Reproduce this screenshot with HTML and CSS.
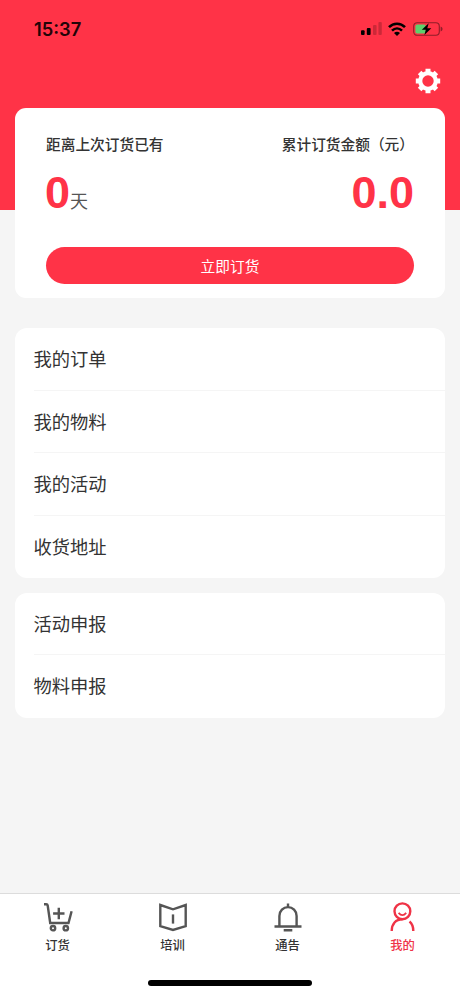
FILE: index.html
```html
<!DOCTYPE html>
<html lang="zh-CN">

<head>
  <meta charset="UTF-8">
  <meta name="viewport" content="width=device-width, initial-scale=1.0">
  <title>我的</title>
  <link rel="stylesheet" href="styles.css">
</head>

<body>
  <div class="page">
    <div class="header">
      <div class="status">
        <span class="time">15:37</span>
        <div class="status-icons">
          <svg width="21" height="13" viewBox="0 0 21 13">
            <rect x="0" y="8.3" width="3.6" height="4.7" rx="1" />
            <rect x="5.8" y="6" width="3.8" height="7" rx="1" />
            <rect x="12" y="3" width="3.6" height="10" rx="1" opacity=".2" />
            <rect x="17.4" y="0" width="3.4" height="13" rx="1" opacity=".2" />
          </svg>
          <svg width="18" height="14" viewBox="0 0 18 14">
            <g fill="none" stroke="#000" stroke-width="2.6">
              <path d="M1 5.2C5.5.5 12.5.5 17 5.2" />
              <path d="M4 8.6C7 5.7 11 5.7 14 8.6" />
            </g>
            <path d="M6 10.9Q9 8.4 12 10.9L9 13.9z" />
          </svg>
          <svg width="30" height="14" viewBox="0 0 30 14">
            <rect x=".7" y=".7" width="25.6" height="12.6" rx="3.5" fill="none" stroke="#8f1e29" stroke-width="1.1" />
            <rect x="2.4" y="2.4" width="10.4" height="9.2" rx="1.8" fill="#5dd06c" />
            <path d="M27.6 4.6q2 .7 2 2.4t-2 2.4z" fill="#8f1e29" />
            <path d="M15.7 1.2L8.8 7.7h4l-1.4 5.3 6.9-6.8h-4z" />
          </svg>
        </div>
      </div>
      <div class="setting">
        <svg width="26" height="26" viewBox="-13 -13 26 26" fill="none" stroke="#fff">
          <circle r="7.8" stroke-width="4.2" />
          <path stroke-width="5" stroke-linejoin="round" d="M0-8V-12.2M0 8V12.2M-8 0H-12.2M8 0H12.2M5.7-5.7L8.4-8.4M5.7 5.7L8.4 8.4M-5.7 5.7L-8.4 8.4M-5.7-5.7L-8.4-8.4" />
        </svg>
      </div>
    </div>

    <div class="card">
      <div class="total">
        <div class="total-item">
          <p class="total-tit">距离上次订货已有</p>
          <p class="total-num">0<span class="unit">天</span></p>
        </div>
        <div class="total-item total-right">
          <p class="total-tit">累计订货金额（元）</p>
          <p class="total-num">0.0</p>
        </div>
      </div>
      <button class="btn">立即订货</button>
    </div>

    <ul class="list">
      <li>我的订单</li>
      <li>我的物料</li>
      <li>我的活动</li>
      <li>收货地址</li>
    </ul>
    <ul class="list">
      <li>活动申报</li>
      <li>物料申报</li>
    </ul>

    <div class="footer">
      <div class="tabs">
        <div class="tab">
          <svg width="30" height="30" viewBox="0 0 30 30">
            <path d="M1 2.2h2.2q1.3 0 1.5 1.3L7.2 21h18.3L28.6 9.3" />
            <path d="M15.8 5.8v11.4M10.1 11.5h11.4" />
            <circle cx="10" cy="26.2" r="2.2" />
            <circle cx="22.8" cy="26.2" r="2.2" />
          </svg>
          <span>订货</span>
        </div>
        <div class="tab">
          <svg width="30" height="30" viewBox="0 0 30 30">
            <path d="M2.3 3L15 7.3 27.7 3v21.2L15 28 2.3 24.2z" />
            <path d="M15 12.4v9.2" />
          </svg>
          <span>培训</span>
        </div>
        <div class="tab">
          <svg width="30" height="30" viewBox="0 0 30 30">
            <path d="M15 1.4v4M6.4 24.5V14a8.6 8.9 0 0 1 17.2 0v10.5M1.5 24.5h27M10.7 28.2h8.6" />
          </svg>
          <span>通告</span>
        </div>
        <div class="tab active">
          <svg width="30" height="30" viewBox="0 0 30 30">
            <circle cx="14.4" cy="9.3" r="7.9" />
            <path d="M10.6 10.8q3.8 4.5 7.6 0" stroke-width="1.8" />
            <path d="M3.7 29C3.7 22 7.7 17.2 14.4 17.2M21.5 19.5C24.2 21.7 25.3 25 25.3 29" />
          </svg>
          <span>我的</span>
        </div>
      </div>
      <div class="home-bar"></div>
    </div>
  </div>
</body>

</html>
```
FILE: styles.css
```css
body,
p,
ul {
  margin: 0;
  padding: 0;
}

ul {
  list-style: none;
}

body {
  font-family: "Liberation Sans", "Noto Sans CJK SC", sans-serif;
  color: #333;
  background-color: #f5f5f5;
}

svg {
  display: block;
}

.page {
  display: flex;
  flex-direction: column;
  height: 996px;
}

/* 顶部 */
.header {
  box-sizing: border-box;
  flex: none;
  height: 210px;
  margin-bottom: -102px;
  background-color: #ff3347;
}

.status {
  display: flex;
  justify-content: space-between;
  align-items: center;
  height: 57px;
  padding: 0 17.5px 0 34px;
}

.time {
  font: 600 18.3px/20px Inter, sans-serif;
  color: #210408;
}

.status-icons {
  display: flex;
  align-items: center;
  gap: 6.5px;
}

.setting {
  display: flex;
  justify-content: flex-end;
  padding: 11px 19.5px 0 0;
}

/* 订货统计 */
.card {
  box-sizing: border-box;
  flex: none;
  height: 190px;
  margin: 0 15px 30px;
  padding: 26px 31px 0;
  border-radius: 11px;
  background-color: #fff;
  z-index: 1;
}

.total {
  display: flex;
  justify-content: space-between;
  height: 113px;
}

.total-tit {
  font-size: 14.7px;
  line-height: 22px;
  font-weight: 500;
}

.total-num {
  margin: 10px 0 0 -1px;
  font-size: 45px;
  line-height: 53px;
  font-weight: bold;
  color: #ff3347;
}

.total-right {
  text-align: right;
}

.unit {
  font-size: 18px;
  font-weight: normal;
  color: #555;
}

.btn {
  display: block;
  width: 100%;
  height: 37px;
  padding: 0 0 1px;
  border: none;
  border-radius: 19px;
  background-color: #ff3347;
  font-family: inherit;
  font-size: 14.7px;
  color: #fff;
}

/* 菜单 */
.list {
  flex: none;
  margin: 0 15px 14.5px;
  padding-left: 18.5px;
  border-radius: 12px;
  background-color: #fff;
}

.list li {
  box-sizing: border-box;
  height: 62.5px;
  border-bottom: 1px solid #f5f5f5;
  font-size: 18.3px;
  line-height: 64.5px;
}

.list li:last-child {
  border-bottom: none;
}

/* 底部导航 */
.footer {
  box-sizing: border-box;
  height: 103px;
  margin-top: auto;
  border-top: 1px solid #dcdcdc;
  background-color: #fff;
}

.tabs {
  display: flex;
  height: 86px;
}

.tab {
  flex: 1;
  display: flex;
  flex-direction: column;
  align-items: center;
  padding-top: 8px;
  font-size: 12.3px;
  line-height: 18px;
  font-weight: 500;
  color: #333;
}

.tab svg {
  margin-bottom: 5px;
  fill: none;
  stroke: #555;
  stroke-width: 2.4;
}

.active {
  color: #ef3346;
}

.active svg {
  stroke: #ef3346;
}

.home-bar {
  width: 164px;
  height: 6px;
  margin: 0 auto;
  border-radius: 3px;
  background-color: #000;
}
```
